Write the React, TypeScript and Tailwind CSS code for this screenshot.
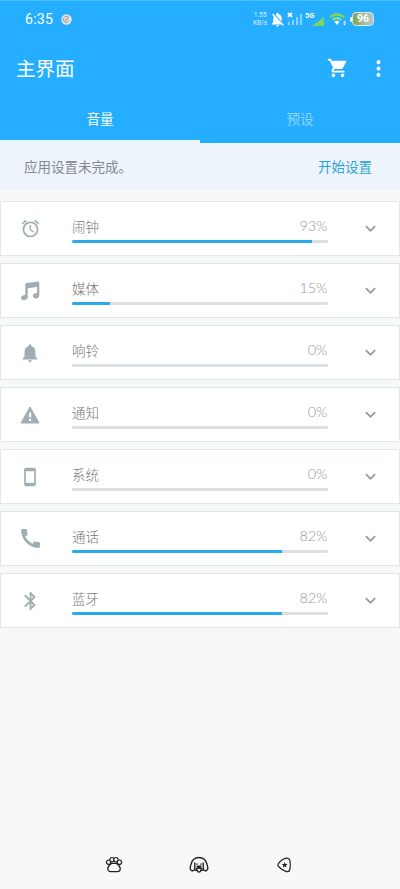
import type { ReactNode } from 'react';
import {
  MdAlarm,
  MdBluetooth,
  MdCall,
  MdExpandMore,
  MdMoreVert,
  MdNotifications,
  MdNotificationsOff,
  MdShoppingCart,
  MdStayCurrentPortrait,
} from 'react-icons/md';

interface Channel {
  id: string;
  name: string;
  volume: number;
  icon: ReactNode;
}

function MusicIcon() {
  return (
    <svg viewBox="0 0 20 20" className="size-5" fill="currentColor">
      <path d="M5.300 3.300q0-1.100 1.100-1.300L18 .5q1.300-.1 1.300 1.100V14h-2.200V6L7.700 7.300v9.200H5.300z" />
      <ellipse cx="4.300" cy="16.600" rx="3.300" ry="2.600" transform="rotate(-18 4.300 16.600)" />
      <ellipse cx="16.100" cy="14.800" rx="3.200" ry="2.600" transform="rotate(-18 16.100 14.800)" />
    </svg>
  );
}

function WarningIcon() {
  return (
    <svg viewBox="0 0 20 20" className="size-5">
      <path d="M10 2 19 18H1z" fill="currentColor" stroke="currentColor" strokeWidth="1" strokeLinejoin="round" />
      <path d="M9 7.500h2.200v4.700H9zM9 13.800h2.200V16H9z" fill="#fff" />
    </svg>
  );
}

const channels: Channel[] = [
  { id: 'alarm', name: '闹钟', volume: 93, icon: <MdAlarm className="size-[21px]" /> },
  { id: 'media', name: '媒体', volume: 15, icon: <MusicIcon /> },
  { id: 'ring', name: '响铃', volume: 0, icon: <MdNotifications className="size-[22px]" /> },
  { id: 'notification', name: '通知', volume: 0, icon: <WarningIcon /> },
  { id: 'system', name: '系统', volume: 0, icon: <MdStayCurrentPortrait className="size-5" /> },
  { id: 'call', name: '通话', volume: 82, icon: <MdCall className="size-[25px]" /> },
  { id: 'bluetooth', name: '蓝牙', volume: 82, icon: <MdBluetooth className="size-[22px] translate-x-[0.5px]" /> },
];

function StatusBar() {
  return (
    <div className="flex h-[36px] items-center pl-[25px] pr-[26px]">
      <span className="font-['Roboto'] text-[14px] leading-none tracking-[0.3px]">6:35</span>
      <svg viewBox="0 0 12 12" className="ml-[8px] size-[11px]">
        <circle cx="6" cy="6" r="5.6" fill="#e8e9ea" />
        <path d="M8.8 3.8A3.5 3.5 0 1 0 9.3 7M4.4 7.6c0-2 1.4-3.4 3.2-3.3.3 1.8-1.1 3.3-3.2 3.3" fill="none" stroke="#9a8f91" strokeWidth="1" />
      </svg>

      <div className="ml-auto flex items-center">
        <div className="flex w-[14px] flex-col items-center font-['Roboto'] text-[6.5px] leading-[8px] opacity-80">
          <span>1.55</span>
          <span>KB/s</span>
        </div>
        <MdNotificationsOff className="ml-[2px] size-[17px]" />
        {/* SIM 1, no service */}
        <svg viewBox="0 0 16 14" className="ml-[1px] h-[14px] w-4">
          <path d="m1 .8 4 4M5 .8l-4 4" stroke="#fff" strokeWidth="1.7" />
          <g fill="#fff" fillOpacity=".45">
            <rect x="1" y="10" width="2" height="3" />
            <rect x="5" y="8" width="2" height="5" />
            <rect x="9" y="5" width="2" height="8" />
            <rect x="13" y="2" width="2" height="11" />
          </g>
        </svg>
        {/* SIM 2, 5G */}
        <svg viewBox="0 0 20 15" className="ml-[2px] h-[15px] w-5">
          <text x="0" y="5.5" fill="#fff" fontSize="7.5" fontWeight="700" fontFamily="Roboto, sans-serif">5G</text>
          <path d="M7 14 19 5v9z" fill="#7ed45c" />
        </svg>
        <svg viewBox="0 0 18 14" className="ml-[4px] h-[14px] w-[18px]" fill="none">
          <path d="M1 5.2a10.5 10.5 0 0 1 14 0" stroke="#84d84f" strokeWidth="2.4" />
          <path d="M3.8 8a6.2 6.2 0 0 1 8.400 0" stroke="#a5e77a" strokeWidth="2" />
          <path d="m5.600 10 2.400 3 2.400-3a3.500 3.500 0 0 0-4.800 0" fill="#fff" />
          <path d="M14.2 10.5 15.6 8.500l1.400 2zM14.200 11.500l1.400 2 1.400-2z" fill="#fff" />
        </svg>
        <span className="ml-[3px] h-[5px] w-[2px] rounded-l bg-white" />
        <div className="flex h-[14px] w-[22px] items-center justify-center rounded-[4px] border border-[#dce5dc] bg-linear-to-r from-[#87a95d] from-15% via-[#a7bd94] to-[#b6c5d5] font-['Roboto'] text-[10.5px] leading-none font-bold">
          96
        </div>
      </div>
    </div>
  );
}

function Header() {
  return (
    <header className="h-[143px] border-t border-[#48c3ff] bg-[#25aeff] text-white">
      <StatusBar />
      <div className="flex h-[62px] items-center pl-4 pr-[10px]">
        <h1 className="text-[19.5px] font-normal leading-none">主界面</h1>
        <MdShoppingCart className="ml-auto size-[22px]" />
        <MdMoreVert className="ml-[18px] size-[23px] scale-y-110" />
      </div>
      <div className="grid h-[44px] grid-cols-2 text-[13.5px]">
        <div className="flex items-center justify-center border-b-[3px] border-[#e9f8ff] pb-[2px]">音量</div>
        <div className="flex items-center justify-center border-b-[3px] border-transparent pb-[2px] text-[#91d7ff]">预设</div>
      </div>
    </header>
  );
}

function VolumeCard({ channel }: { channel: Channel }) {
  return (
    <div className="flex h-[55px] border border-[#dfe7ea] bg-white">
      <div className="flex w-[58px] items-center justify-center text-[#a0adb2]">{channel.icon}</div>
      <div className="ml-[13px] w-64 pt-[15px]">
        <div className="flex h-[23px] items-start justify-between leading-[18px]">
          <span className="text-[13.5px] font-light text-[#777]">{channel.name}</span>
          <span className="pr-px font-['Lato'] text-[14.5px] font-light tracking-[-0.2px] text-[#94989a]">
            {channel.volume}%
          </span>
        </div>
        <div className="h-[3px] overflow-hidden rounded-full bg-[#dce0e2]">
          <div className="h-full bg-[#2ba9ed]" style={{ width: `${channel.volume === 93 ? 93.75 : channel.volume}%` }} />
        </div>
      </div>
      <MdExpandMore className="ml-[32px] mt-[16px] size-[21px] text-[#96999b]" />
    </div>
  );
}

function NavBar() {
  return (
    <nav className="mt-auto flex h-[48px] items-center justify-between pl-[105px] pr-[107px] text-[#222]">
      <svg viewBox="0 0 18 18" className="size-[18px]" fill="#f8f8f8" stroke="currentColor" strokeWidth="1.2">
        <circle cx="3.6" cy="6.2" r="2.2" />
        <circle cx="7" cy="3.7" r="2.2" />
        <circle cx="11" cy="3.7" r="2.2" />
        <circle cx="14.4" cy="6.2" r="2.2" />
        <path d="M6.5 7.5h5c1.5 1 3.8 3 3.8 5.2 0 2-1.4 2.9-3 2.9H5.7c-1.6 0-3-.9-3-2.9 0-2.2 2.3-4.2 3.8-5.2z" />
      </svg>
      <svg viewBox="0 0 20 18" className="h-[18px] w-5" fill="none" stroke="currentColor" strokeWidth="1.4" strokeLinejoin="round">
        <path d="M2.5 14.5C.5 13.5 1 11 2 8.5 3 4 6 1.5 10 1.5s7 2.5 8 7c1 2.5 1.500 5-.5 6-2 .7-3.300-.6-3.300-2.500V6.500M2.500 14.500c2 .7 3.300-.6 3.300-2.500V6.500" />
        <path d="M5.800 14.300h2.700M11.500 14.300h2.700M6.800 13 10 11.500l3.200 1.500M8.300 14c0 2.800 3.400 2.800 3.400 0" />
        <path d="M8 7.500v1.300M12 7.500v1.300" />
        <path d="M8.200 10.300h3.600L10 12.300z" fill="currentColor" />
      </svg>
      <svg viewBox="0 0 18 18" className="size-[18px]" fill="none" stroke="currentColor" strokeWidth="1.2">
        <path d="M3.500 7.500C6 4.500 8.500 2.700 11.500 2.200c2-.3 3 .7 3.400 2.300.6 3 .6 6 0 9-.4 1.700-1.600 2.500-3.400 2.100-3.200-.8-5.700-2.600-8-5.100-.9-1-.9-2 0-3z" />
        <path d="m9.700 6 .8 1.900 2.100.2-1.600 1.400.5 2.100-1.800-1.100-1.800 1.100.5-2.100-1.600-1.400 2.100-.2z" fill="currentColor" stroke="none" />
      </svg>
    </nav>
  );
}

export default function App() {
  return (
    <div className="flex h-[889px] w-[400px] flex-col bg-[#f7f8f8] font-['Noto_Sans_CJK_SC',sans-serif]">
      <Header />
      <div className="flex h-[47px] items-center justify-between bg-[#edf4fb] pl-6 pr-[28px] text-[13.5px]">
        <span className="text-[#85898c]">应用设置未完成。</span>
        <button className="text-[#2ea2df]">开始设置</button>
      </div>
      <main className="mt-[11px] flex flex-col gap-[7px]">
        {channels.map((channel) => (
          <VolumeCard key={channel.id} channel={channel} />
        ))}
      </main>
      <NavBar />
    </div>
  );
}
